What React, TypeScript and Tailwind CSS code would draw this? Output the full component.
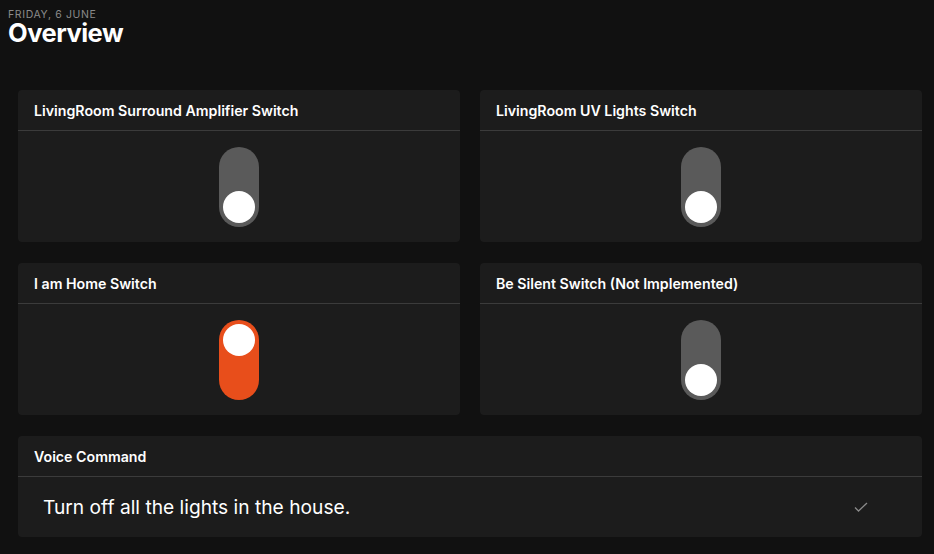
import React from "react";

type SwitchCard = { title: string; on: boolean };

const cards: SwitchCard[] = [
  { title: "LivingRoom Surround Amplifier Switch", on: false },
  { title: "LivingRoom UV Lights Switch", on: false },
  { title: "I am Home Switch", on: true },
  { title: "Be Silent Switch (Not Implemented)", on: false },
];

const Toggle = ({ on }: { on: boolean }) => (
  <div
    className={`w-10 h-20 rounded-full p-1 flex flex-col ${
      on ? "bg-[#e84e1b] justify-start" : "bg-[#5a5a5a] justify-end"
    }`}
  >
    <div className="w-8 h-8 rounded-full bg-white" />
  </div>
);

const Card = ({ title, children }: { title: string; children: React.ReactNode }) => (
  <div className="bg-[#1c1c1c] rounded-[4px] flex flex-col">
    <div className="h-[41px] flex items-center px-4 pt-[2px] border-b border-[#3b3b3b] text-[14.2px] font-semibold text-white">
      {title}
    </div>
    {children}
  </div>
);

export default function App() {
  return (
    <div
      className="w-[934px] h-[554px] bg-[#111111] overflow-hidden pl-[18px] pr-[12px] pt-[9px]"
      style={{ fontFamily: "Inter, 'Noto Sans', sans-serif" }}
    >
      <div className="-ml-[10px] text-[10.5px] leading-[11px] tracking-[0.06em] text-[#8a8a8a]">
        FRIDAY, 6 JUNE
      </div>
      <h1 className="-ml-[10px] mt-[1px] text-[25.5px] leading-[24px] font-bold text-white tracking-[-0.02em]">
        Overview
      </h1>
      <div className="mt-[45px] grid grid-cols-2 gap-x-5 gap-y-[21px]">
        {cards.map((c) => (
          <Card key={c.title} title={c.title}>
            <div className="h-[111px] flex items-center justify-center">
              <Toggle on={c.on} />
            </div>
          </Card>
        ))}
        <div className="col-span-2">
          <Card title="Voice Command">
            <div className="h-[60px] flex items-center justify-between pl-[25px] pr-[54px]">
              <span className="text-[19.2px] text-white">Turn off all the lights in the house.</span>
              <svg width="14" height="10" viewBox="0 0 14 10" fill="none">
                <path d="M1 5.5 L4.5 9 L13 1" stroke="#8a8a8a" strokeWidth="1.3" />
              </svg>
            </div>
          </Card>
        </div>
      </div>
    </div>
  );
}
